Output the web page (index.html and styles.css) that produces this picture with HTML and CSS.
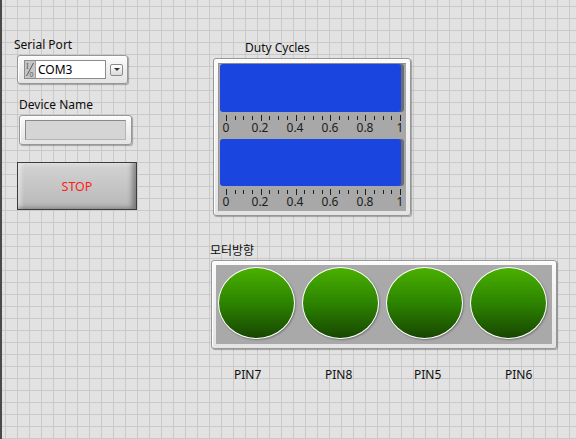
FILE: index.html
```html
<!DOCTYPE html>
<html lang="ko">
<head>
    <meta charset="UTF-8">
    <meta name="viewport" content="width=device-width, initial-scale=1.0">
    <title>Motor Control Panel</title>
    <link rel="stylesheet" href="styles.css">
</head>
<body>

<div class="left">
    <label class="caption">Serial Port</label>
    <div class="bezel ring">
        <div class="ring-field">
            <span class="io-tag">
                <svg width="10" height="17" viewBox="0 0 10 17">
                    <text x="1" y="8" font-family="Liberation Serif" font-size="8" fill="#555">I</text>
                    <line x1="8.5" y1="2" x2="1.5" y2="15" stroke="#5a5a5a" stroke-width="1"/>
                    <text x="4.5" y="16" font-family="Liberation Sans" font-size="7" fill="#555">0</text>
                </svg>
            </span>
            <span class="ring-value">COM3</span>
        </div>
        <span class="ring-arrow"></span>
    </div>

    <label class="caption caption-dev">Device Name</label>
    <div class="bezel indicator">
        <div class="indicator-field"></div>
    </div>

    <button class="stop">STOP</button>
</div>

<div class="right">
    <label class="caption caption-duty">Duty Cycles</label>
    <div class="bezel slides">
        <div class="slides-inner">
            <div class="bar"></div>
            <svg class="scale" width="188" height="27" viewBox="0 0 188 27">
                <defs>
                    <symbol id="ticks" viewBox="0 0 188 27">
                        <g stroke="#1e1e1e" stroke-width="1">
                            <line x1="7.5" y1="3" x2="7.5" y2="9"/>
                            <line x1="16.5" y1="4" x2="16.5" y2="8"/>
                            <line x1="24.5" y1="4" x2="24.5" y2="8"/>
                            <line x1="33.5" y1="4" x2="33.5" y2="8"/>
                            <line x1="42.5" y1="3" x2="42.5" y2="9"/>
                            <line x1="50.5" y1="4" x2="50.5" y2="8"/>
                            <line x1="59.5" y1="4" x2="59.5" y2="8"/>
                            <line x1="68.5" y1="4" x2="68.5" y2="8"/>
                            <line x1="77.5" y1="3" x2="77.5" y2="9"/>
                            <line x1="85.5" y1="4" x2="85.5" y2="8"/>
                            <line x1="94.5" y1="4" x2="94.5" y2="8"/>
                            <line x1="103.5" y1="4" x2="103.5" y2="8"/>
                            <line x1="111.5" y1="3" x2="111.5" y2="9"/>
                            <line x1="120.5" y1="4" x2="120.5" y2="8"/>
                            <line x1="129.5" y1="4" x2="129.5" y2="8"/>
                            <line x1="138.5" y1="4" x2="138.5" y2="8"/>
                            <line x1="146.5" y1="3" x2="146.5" y2="9"/>
                            <line x1="155.5" y1="4" x2="155.5" y2="8"/>
                            <line x1="164.5" y1="4" x2="164.5" y2="8"/>
                            <line x1="172.5" y1="4" x2="172.5" y2="8"/>
                            <line x1="181.5" y1="3" x2="181.5" y2="9"/>
                        </g>
                        <g font-family="Noto Sans" font-size="12" fill="#1c1c1c" text-anchor="middle">
                            <text x="7" y="20">0</text>
                            <text x="41" y="20">0.2</text>
                            <text x="76" y="20">0.4</text>
                            <text x="111" y="20">0.6</text>
                            <text x="146" y="20">0.8</text>
                            <text x="181" y="20">1</text>
                        </g>
                    </symbol>
                </defs>
                <use href="#ticks"/>
            </svg>
            <div class="bar bar-second"></div>
            <svg class="scale" width="188" height="26" viewBox="0 0 188 26">
                <use href="#ticks" width="188" height="27"/>
            </svg>
        </div>
    </div>

    <label class="caption caption-motor">모터방향</label>
    <div class="bezel leds">
        <div class="leds-inner">
            <span class="led"></span>
            <span class="led"></span>
            <span class="led"></span>
            <span class="led"></span>
        </div>
    </div>

    <div class="pins">
        <span>PIN7</span>
        <span>PIN8</span>
        <span>PIN5</span>
        <span>PIN6</span>
    </div>
</div>

</body>
</html>
```

FILE: styles.css
```css
html {
    background-color: #e2e2e2;
    background-image:
        linear-gradient(to right, #c9c9c9 1px, transparent 1px),
        linear-gradient(to bottom, #c9c9c9 1px, transparent 1px);
    background-size: 12px 12px;
    background-position: 5px 6px;
}
body {
    margin: 0;
    min-height: 439px;
    box-sizing: border-box;
    border-left: 2px solid #4a4a4a;
    padding-left: 12px;
    display: grid;
    grid-template-columns: 196px auto;
    align-items: start;
    font-family: "Noto Sans", "Noto Sans CJK KR", sans-serif;
    font-size: 12px;
    line-height: 16px;
    color: #0e0e0e;
}

/* columns */
.left {
    display: flex;
    flex-direction: column;
    align-items: flex-start;
    padding-top: 37px;
}
.right {
    display: flex;
    flex-direction: column;
    align-items: flex-start;
    padding-top: 40px;
}
.caption {
    display: block;
}

/* raised frame shared by every control */
.bezel {
    box-sizing: border-box;
    border: 1px solid #979797;
    border-radius: 3px;
    background: linear-gradient(#fbfbfb, #e3e3e3);
    box-shadow: inset 1px 1px 0 #fff, 1px 1px 1px rgba(0, 0, 0, 0.28);
}

/* serial port ring */
.ring {
    margin: 2px 0 0 3px;
    width: 111px;
    height: 29px;
    padding-left: 6px;
    display: flex;
    align-items: center;
}
.ring-field {
    display: flex;
    width: 82px;
    height: 19px;
    box-sizing: border-box;
    border: 1px solid #8c8c8c;
    background: #fff;
}
.io-tag {
    width: 10px;
    background: #c6c6c6;
    border-right: 1px solid #a0a0a0;
}
.io-tag svg {
    display: block;
}
.ring-value {
    padding-left: 2px;
    line-height: 17px;
    color: #000;
}
.ring-arrow {
    margin-left: 4px;
    width: 13px;
    height: 12px;
    box-sizing: border-box;
    border: 1px solid #8a8a8a;
    border-radius: 2px;
    background: linear-gradient(#fff, #dadada);
    display: flex;
    align-items: center;
    justify-content: center;
}
.ring-arrow::after {
    content: "";
    border-left: 3px solid transparent;
    border-right: 3px solid transparent;
    border-top: 3px solid #333;
}

/* device name indicator */
.caption-dev {
    margin: 13px 0 0 5px;
}
.indicator {
    margin: 2px 0 0 5px;
    width: 113px;
    height: 30px;
    padding: 4px 5px;
}
.indicator-field {
    height: 20px;
    box-sizing: border-box;
    border: 1px solid #8a8a8a;
    border-right-color: #b4b4b4;
    border-bottom-color: #b4b4b4;
    background: #d5d5d5;
}

/* stop button */
.stop {
    margin: 17px 0 0 3px;
    width: 120px;
    height: 48px;
    padding: 0;
    border: 1px solid #3d3d3d;
    background: linear-gradient(#d3d3d3, #b8b8b8);
    box-shadow: inset -6px -3px 5px -2px rgba(0, 0, 0, 0.35), inset 5px 3px 4px -2px rgba(255, 255, 255, 0.45);
    color: #ff1e1e;
    font-family: "Noto Sans", sans-serif;
    font-size: 12.5px;
    cursor: pointer;
}

/* duty cycle slides */
.caption-duty {
    margin-left: 35px;
}
.slides {
    margin: 2px 0 0 3px;
    width: 198px;
    height: 158px;
    padding: 4px;
}
.slides-inner {
    height: 100%;
    box-sizing: border-box;
    background: #a8a8a8;
    border-top: 1px solid #8e8e8e;
    border-left: 1px solid #969696;
}
.bar {
    margin-left: 1px;
    width: 181px;
    height: 48px;
    border-radius: 3px;
    background: #1a46df;
    box-shadow: 3px 0 0 #6a6b7b;
}
.bar-second {
    height: 47px;
}
.scale {
    display: block;
}

/* motor direction LEDs */
.caption-motor {
    margin-top: 27px;
}
.leds {
    margin: 1px 0 0 1px;
    width: 346px;
    height: 89px;
    padding: 4px;
}
.leds-inner {
    height: 100%;
    box-sizing: border-box;
    background: #a9a9a9;
    padding: 2px 0 0 2px;
    display: flex;
    gap: 7px;
}
.led {
    width: 77px;
    height: 72px;
    box-sizing: border-box;
    border: 1.5px solid #fff;
    border-radius: 50%;
    background: linear-gradient(#4ab000, #2c8400 50%, #184600);
    box-shadow: 1px 1px 2px rgba(0, 0, 0, 0.3);
}

.pins {
    margin-top: 18px;
    padding-left: 24px;
    display: grid;
    grid-template-columns: 91px 89px 91px auto;
}
```
